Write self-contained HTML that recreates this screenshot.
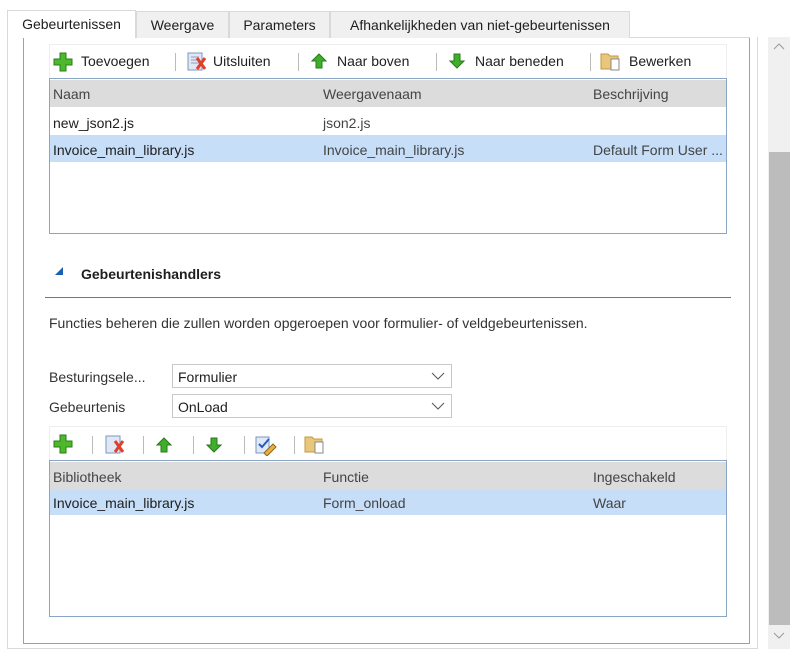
<!DOCTYPE html>
<html><head><meta charset="utf-8"><style>
*{margin:0;padding:0;box-sizing:border-box}
body{width:803px;height:658px;background:#fff;font-family:"Liberation Sans",sans-serif;font-size:14px;color:#1e1e1e;position:relative;overflow:hidden}
.a{position:absolute}
.tab{position:absolute;top:11px;height:27px;background:#f0f0f0;border:1px solid #d9d9d9;border-bottom:none;padding-top:5px;text-align:center;font-size:14px}
.t{position:absolute;white-space:nowrap}
.sep{position:absolute;width:1px;height:18px;background:#bbb}
.grid{position:absolute;border:1px solid #8aa6c4;background:#fff}
.hdr{position:absolute;left:0;right:0;background:#dcdcdc}
.sel{position:absolute;left:0;right:0;background:#c6def7}
.dd{position:absolute;left:172px;width:280px;height:24px;border:1px solid #c8c8c8;background:#fff}
</style></head><body>
<div class="a" style="left:7px;top:37px;width:751px;height:612px;border:1px solid #dadada;border-top:none"></div>
<div class="a" style="left:23px;top:37px;width:727px;height:607px;border-left:1px solid #a0a0a0;border-right:1px solid #a0a0a0;border-bottom:1px solid #a0a0a0"></div>
<div class="a" style="left:7px;top:37px;width:743px;height:1px;background:#d9d9d9"></div>
<div class="tab" style="left:7px;width:129px;background:#fff;height:28px;top:10px">Gebeurtenissen</div>
<div class="tab" style="left:136px;width:93px">Weergave</div>
<div class="tab" style="left:229px;width:101px">Parameters</div>
<div class="tab" style="left:330px;width:300px">Afhankelijkheden van niet-gebeurtenissen</div>
<!-- scrollbar -->
<div class="a" style="left:768px;top:37px;width:22px;height:612px;background:#f0f0f0"></div>
<div class="a" style="left:769px;top:152px;width:21px;height:473px;background:#bcbcbc"></div>
<svg class="a" style="left:773px;top:42px" width="12" height="10"><path d="M1 7 L6 2 L11 7" fill="none" stroke="#999"/></svg>
<svg class="a" style="left:773px;top:630px" width="12" height="10"><path d="M1 3 L6 8 L11 3" fill="none" stroke="#999"/></svg>
<!-- toolbar 1 -->
<div class="a" style="left:49px;top:44px;width:678px;height:34px;border:1px solid #eee;border-bottom:none"></div>
<svg class="a" style="left:53px;top:52px" width="20" height="20"><path d="M7 1h6v6h6v6h-6v6H7v-6H1V7h6z" fill="#4cb82c" stroke="#2d7d17"/></svg>
<div class="t" style="left:81px;top:53px">Toevoegen</div>
<div class="sep" style="left:175px;top:53px"></div>
<svg class="a" style="left:187px;top:51px" width="20" height="20"><rect x="1" y="2" width="14" height="17" fill="#dfe8f4" stroke="#7a97c0"/><path d="M4 6h8M4 9h8M4 12h8" stroke="#99b"/><path d="M10 7l8 11M18 7l-8 11" stroke="#e0402a" stroke-width="3"/></svg>
<div class="t" style="left:213px;top:53px">Uitsluiten</div>
<div class="sep" style="left:298px;top:53px"></div>
<svg class="a" style="left:311px;top:53px" width="16" height="16"><path d="M8 1L15 8H11V15H5V8H1z" fill="#3fae2a" stroke="#2a7a1a"/></svg>
<div class="t" style="left:337px;top:53px">Naar boven</div>
<div class="sep" style="left:436px;top:53px"></div>
<svg class="a" style="left:449px;top:53px" width="16" height="16"><path d="M8 15L15 8H11V1H5V8H1z" fill="#3fae2a" stroke="#2a7a1a"/></svg>
<div class="t" style="left:475px;top:53px">Naar beneden</div>
<div class="sep" style="left:590px;top:53px"></div>
<svg class="a" style="left:600px;top:51px" width="22" height="20"><path d="M1 3h7l2 2h8v13H1z" fill="#e8c67a" stroke="#c09a45"/><rect x="11" y="8" width="8" height="11" fill="#fff" stroke="#888"/></svg>
<div class="t" style="left:629px;top:53px">Bewerken</div>
<!-- grid 1 -->
<div class="grid" style="left:49px;top:78px;width:678px;height:156px">
<div class="hdr" style="top:1px;height:27px"></div>
<div class="sel" style="top:56px;height:27px"></div>
<div class="t" style="left:3px;top:7px;color:#444">Naam</div>
<div class="t" style="left:273px;top:7px;color:#444">Weergavenaam</div>
<div class="t" style="left:543px;top:7px;color:#444">Beschrijving</div>
<div class="t" style="left:3px;top:36px">new_json2.js</div>
<div class="t" style="left:273px;top:36px;color:#444">json2.js</div>
<div class="t" style="left:3px;top:63px">Invoice_main_library.js</div>
<div class="t" style="left:273px;top:63px;color:#444">Invoice_main_library.js</div>
<div class="t" style="left:543px;top:63px;color:#444">Default Form User ...</div>
</div>
<!-- section -->
<svg class="a" style="left:55px;top:267px" width="9" height="9"><path d="M8 0V8H0z" fill="#1b5fb0"/></svg>
<div class="t" style="left:81px;top:266px;font-weight:bold;font-size:14px">Gebeurtenishandlers</div>
<div class="a" style="left:45px;top:297px;width:686px;height:1px;background:#777"></div>
<div class="t" style="left:49px;top:315px;color:#333">Functies beheren die zullen worden opgeroepen voor formulier- of veldgebeurtenissen.</div>
<div class="t" style="left:49px;top:369px;color:#333">Besturingsele...</div>
<div class="t" style="left:49px;top:399px;color:#333">Gebeurtenis</div>
<div class="dd" style="top:364px"><span class="t" style="left:5px;top:4px">Formulier</span><svg class="a" style="right:6px;top:7px" width="14" height="9"><path d="M1 1l6 6 6-6" fill="none" stroke="#555"/></svg></div>
<div class="dd" style="top:394px"><span class="t" style="left:5px;top:4px">OnLoad</span><svg class="a" style="right:6px;top:7px" width="14" height="9"><path d="M1 1l6 6 6-6" fill="none" stroke="#555"/></svg></div>
<!-- toolbar 2 -->
<div class="a" style="left:49px;top:426px;width:678px;height:34px;border:1px solid #eee;border-bottom:none"></div>
<svg class="a" style="left:53px;top:434px" width="20" height="20"><path d="M7 1h6v6h6v6h-6v6H7v-6H1V7h6z" fill="#4cb82c" stroke="#2d7d17"/></svg>
<div class="sep" style="left:92px;top:436px"></div>
<svg class="a" style="left:105px;top:434px" width="20" height="20"><rect x="1" y="2" width="14" height="17" fill="#dfe8f4" stroke="#7a97c0"/><path d="M10 7l8 11M18 7l-8 11" stroke="#e0402a" stroke-width="3"/></svg>
<div class="sep" style="left:143px;top:436px"></div>
<svg class="a" style="left:156px;top:437px" width="16" height="16"><path d="M8 1L15 8H11V15H5V8H1z" fill="#3fae2a" stroke="#2a7a1a"/></svg>
<div class="sep" style="left:193px;top:436px"></div>
<svg class="a" style="left:206px;top:437px" width="16" height="16"><path d="M8 15L15 8H11V1H5V8H1z" fill="#3fae2a" stroke="#2a7a1a"/></svg>
<div class="sep" style="left:244px;top:436px"></div>
<svg class="a" style="left:255px;top:434px" width="22" height="22"><rect x="1" y="3" width="13" height="16" fill="#dfe8f4" stroke="#7a97c0"/><path d="M4 10l3 3 7-8" fill="none" stroke="#2a5ab8" stroke-width="2"/><path d="M9 19l9-9 3 3-9 9z" fill="#e8b040" stroke="#8a6a20"/></svg>
<div class="sep" style="left:294px;top:436px"></div>
<svg class="a" style="left:304px;top:434px" width="22" height="20"><path d="M1 3h7l2 2h8v13H1z" fill="#e8c67a" stroke="#c09a45"/><rect x="11" y="8" width="8" height="11" fill="#fff" stroke="#888"/></svg>
<!-- grid 2 -->
<div class="grid" style="left:49px;top:460px;width:678px;height:157px">
<div class="hdr" style="top:1px;height:27px"></div>
<div class="sel" style="top:28px;height:26px"></div>
<div class="t" style="left:3px;top:8px;color:#444">Bibliotheek</div>
<div class="t" style="left:273px;top:8px;color:#444">Functie</div>
<div class="t" style="left:543px;top:8px;color:#444">Ingeschakeld</div>
<div class="t" style="left:3px;top:34px">Invoice_main_library.js</div>
<div class="t" style="left:273px;top:34px;color:#444">Form_onload</div>
<div class="t" style="left:543px;top:34px;color:#444">Waar</div>
</div>
</body></html>
